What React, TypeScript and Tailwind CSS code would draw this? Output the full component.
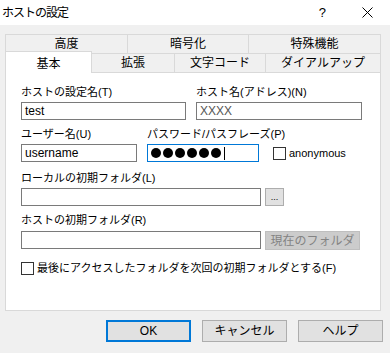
import React from "react"

const font = { fontFamily: '"Liberation Sans", "Noto Sans CJK JP", sans-serif' }

function Field({ w, children, focused }: { w: string; children?: React.ReactNode; focused?: boolean }) {
  return (
    <div
      className={`${w} h-[18px] bg-white border flex items-center px-[3px] text-[12px] ${focused ? "border-[#0078d7]" : "border-[#7a7a7a]"}`}
    >
      {children}
    </div>
  )
}

function Check() {
  return <div className="w-[13px] h-[13px] border border-[#333333] bg-white shrink-0" />
}

function Label({ children }: { children: React.ReactNode }) {
  return <div className="h-[14px] leading-[14px] text-[11px] text-black whitespace-nowrap">{children}</div>
}

export default function App() {
  return (
    <div className="w-[390px] h-[353px] bg-[#f0f0f0] overflow-hidden text-black" style={font}>
      {/* title bar */}
      <div className="h-[25px] bg-white flex items-center pl-[2px] text-[12px]">
        <span className="tracking-[-1px]">ホストの設定</span>
        <span className="ml-auto mr-[36px] text-[13px]">?</span>
        <svg width="11" height="11" viewBox="0 0 11 11" className="mr-[17px]">
          <path d="M0.5 0.5 L10.5 10.5 M10.5 0.5 L0.5 10.5" stroke="#000" strokeWidth="1" />
        </svg>
      </div>

      {/* tabs */}
      <div className="ml-[5px] w-[376px] mt-[9px]">
        <div className="flex h-[19px] text-[12px]">
          <div className="w-[122px] border-t border-l border-[#d9d9d9] flex items-center justify-center">高度</div>
          <div className="w-[121px] border-t border-l border-[#d9d9d9] flex items-center justify-center">暗号化</div>
          <div className="w-[133px] border-t border-l border-r border-[#d9d9d9] flex items-center justify-center">特殊機能</div>
        </div>
        <div className="flex h-[19px] text-[12px]">
          <div className="relative z-10 w-[87px] h-[22px] -mt-[2px] bg-white border-t border-l border-r border-[#d9d9d9] flex items-start pt-[3px] justify-center">基本</div>
          <div className="w-[82px] border-t border-[#d9d9d9] flex items-center justify-center">拡張</div>
          <div className="w-[91px] border-t border-l border-[#d9d9d9] flex items-center justify-center">文字コード</div>
          <div className="w-[116px] border-t border-l border-r border-[#d9d9d9] flex items-center justify-center">ダイアルアップ</div>
        </div>

        {/* panel */}
        <div className="h-[239px] bg-white border border-[#d9d9d9] pl-[15px] pt-[12px]">
          <div className="flex gap-[10px]">
            <div>
              <Label>ホストの設定名(T)</Label>
              <div className="mt-[3px]">
                <Field w="w-[165px]">test</Field>
              </div>
            </div>
            <div>
              <Label>ホスト名(アドレス)(N)</Label>
              <div className="mt-[3px]">
                <Field w="w-[166px]">
                  <span className="text-[#555555]">XXXX</span>
                </Field>
              </div>
            </div>
          </div>

          <div className="flex gap-[10px] mt-[7px]">
            <div>
              <Label>ユーザー名(U)</Label>
              <div className="mt-[3px]">
                <Field w="w-[116px]">username</Field>
              </div>
            </div>
            <div>
              <Label>パスワード/パスフレーズ(P)</Label>
              <div className="mt-[3px] flex items-center">
                <Field w="w-[112px]" focused>
                  <div className="flex gap-[2px] items-center">
                    {[0, 1, 2, 3, 4, 5].map((i) => (
                      <div key={i} className="w-[10px] h-[10px] rounded-full bg-black" />
                    ))}
                    <div className="w-px h-[13px] bg-black ml-[1px]" />
                  </div>
                </Field>
                <div className="ml-[14px] flex items-center gap-[3px] text-[11px]">
                  <Check />
                  <span>anonymous</span>
                </div>
              </div>
            </div>
          </div>

          <div className="mt-[9px]">
            <Label>ローカルの初期フォルダ(L)</Label>
            <div className="mt-[3px] flex gap-[4px]">
              <Field w="w-[240px]" />
              <div className="w-[19px] h-[18px] bg-[#e1e1e1] border border-[#adadad] flex items-end justify-center text-[9px] leading-[12px] pb-[2px]">...</div>
            </div>
          </div>

          <div className="mt-[7px]">
            <Label>ホストの初期フォルダ(R)</Label>
            <div className="mt-[4px] flex gap-[4px]">
              <Field w="w-[240px]" />
              <div className="w-[95px] h-[19px] bg-[#cccccc] border border-[#bfbfbf] flex items-center justify-center text-[12px] text-[#838383]">現在のフォルダ</div>
            </div>
          </div>

          <div className="mt-[10px] flex items-center gap-[3px] text-[11px]">
            <Check />
            <span>最後にアクセスしたフォルダを次回の初期フォルダとする(F)</span>
          </div>
        </div>
      </div>

      {/* buttons */}
      <div className="flex justify-end gap-[11px] pr-[7px] mt-[9px] text-[12px]">
        <div className="w-[85px] h-[22px] bg-[#e1e1e1] border-2 border-[#0078d7] flex items-center justify-center">OK</div>
        <div className="w-[85px] h-[22px] bg-[#e1e1e1] border border-[#adadad] flex items-center justify-center">キャンセル</div>
        <div className="w-[85px] h-[22px] bg-[#e1e1e1] border border-[#adadad] flex items-center justify-center">ヘルプ</div>
      </div>
    </div>
  )
}
